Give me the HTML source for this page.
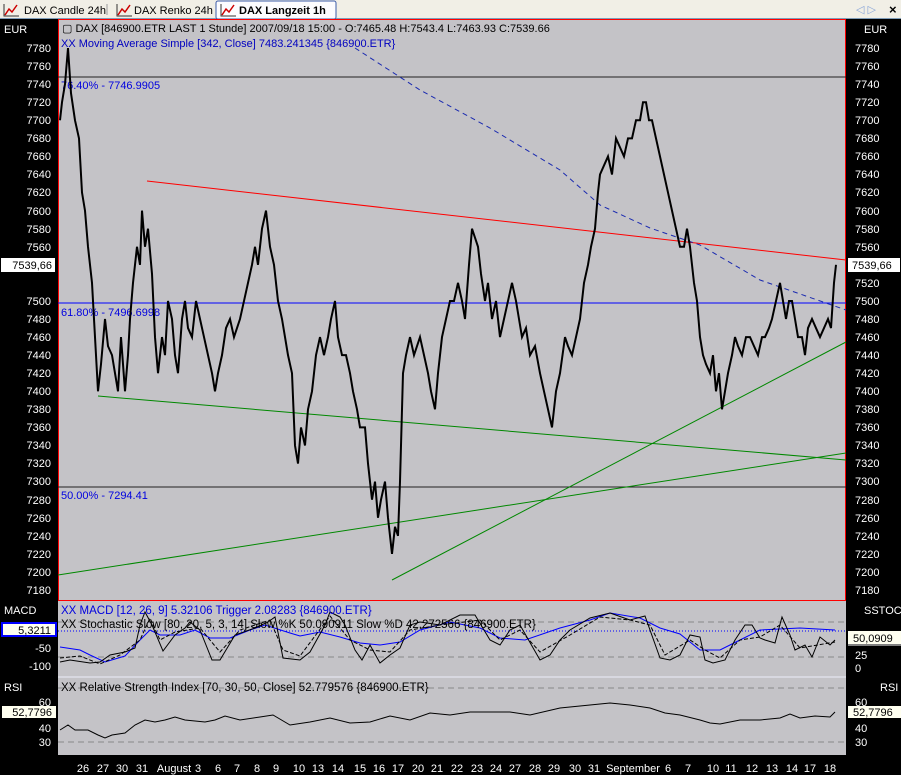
<!DOCTYPE html>
<html><head><meta charset="utf-8"><style>
body{margin:0;width:901px;height:775px;overflow:hidden;background:#000;font-family:"Liberation Sans",sans-serif}
svg{display:block}
</style></head><body>
<svg width="901" height="775" xmlns="http://www.w3.org/2000/svg" font-family="Liberation Sans, sans-serif" font-size="11">
<rect x="0" y="0" width="901" height="19" fill="#f1efe6"/>
<line x1="0" y1="18.5" x2="901" y2="18.5" stroke="#7f9db9"/>
<rect x="216" y="1" width="120" height="18" fill="#fcfcfe" stroke="#3c5ca8" rx="2"/>
<g stroke="#c00" stroke-width="1.5" fill="none">
<path d="M5 15 L9 9 L12 12 L17 5"/><path d="M118 15 L122 9 L125 12 L130 5"/><path d="M222 15 L226 9 L229 12 L234 5"/>
</g>
<g stroke="#333" fill="none"><path d="M4 4 V16 H19"/><path d="M117 4 V16 H132"/><path d="M221 4 V16 H236"/></g>
<text x="24" y="14" font-size="11">DAX Candle 24h</text>
<line x1="107" y1="4" x2="107" y2="15" stroke="#999"/>
<text x="134" y="14" font-size="11">DAX Renko 24h</text>
<text x="239" y="14" font-size="11" font-weight="bold">DAX Langzeit 1h</text>
<text x="856" y="13" fill="#8aa6d8" font-size="11">◁ ▷</text>
<text x="889" y="14" font-size="13" font-weight="bold">×</text>
<rect x="58" y="19" width="788" height="736" fill="#c4c3c7"/>
<rect x="58.5" y="19.5" width="787" height="581" fill="none" stroke="#f00"/>
<line x1="58" y1="677" x2="846" y2="677" stroke="#d8d8e0" stroke-width="2"/>
<line x1="58" y1="77" x2="846" y2="77" stroke="#222"/>
<line x1="58" y1="303" x2="846" y2="303" stroke="#00f"/>
<line x1="58" y1="487" x2="846" y2="487" stroke="#222"/>
<text x="61" y="89" fill="#0000e0">76.40% - 7746.9905</text>
<text x="61" y="316" fill="#0000e0">61.80% - 7496.6998</text>
<text x="61" y="499" fill="#0000e0">50.00% - 7294.41</text>
<line x1="147" y1="181" x2="846" y2="260" stroke="#f00"/>
<g stroke="#080" fill="none">
<line x1="98" y1="396" x2="846" y2="460"/>
<line x1="58" y1="575" x2="846" y2="453"/>
<line x1="392" y1="580" x2="846" y2="342"/>
</g>
<polyline points="355,48 420,90 490,128 560,170 600,205 650,228 700,245 760,280 846,310" fill="none" stroke="#1a2ab0" stroke-dasharray="5,4"/>
<g transform="matrix(1 0 0 -0.9033 0 7075.7)">
<polyline vector-effect="non-scaling-stroke" fill="none" stroke="#000" stroke-width="2" points="60,7700 62,7720 65,7740 68,7780 71,7730 75,7700 79,7680 82,7620 85,7600 88,7560 92,7520 95,7460 98,7400 101,7430 105,7480 108,7450 112,7440 115,7420 118,7400 121,7460 125,7400 128,7440 130,7480 133,7520 137,7560 140,7540 142,7600 145,7560 148,7580 152,7530 155,7460 158,7420 162,7460 165,7440 168,7500 172,7480 175,7440 178,7420 182,7480 185,7500 188,7470 192,7460 196,7500 200,7480 204,7460 208,7440 212,7420 215,7400 218,7420 222,7440 226,7470 230,7480 234,7460 240,7480 244,7500 248,7520 252,7540 255,7560 258,7540 262,7580 266,7600 270,7560 274,7540 278,7500 282,7480 285,7460 288,7440 292,7420 295,7340 298,7320 301,7360 305,7340 308,7380 312,7400 316,7440 320,7460 324,7440 328,7460 331,7480 335,7500 338,7460 342,7440 346,7440 350,7420 353,7400 357,7380 360,7360 365,7360 368,7320 372,7280 375,7300 378,7260 381,7280 385,7300 388,7260 392,7220 395,7250 398,7240 400,7300 403,7420 406,7440 410,7460 414,7440 420,7460 424,7440 428,7420 431,7400 435,7380 438,7420 442,7460 446,7480 450,7500 454,7500 458,7520 462,7500 465,7480 469,7540 472,7580 475,7570 478,7560 481,7530 485,7500 488,7520 492,7480 496,7500 500,7460 504,7480 508,7500 512,7520 516,7500 519,7480 522,7460 526,7470 530,7440 535,7450 540,7420 544,7400 548,7380 552,7360 556,7400 560,7420 565,7460 568,7450 572,7440 576,7460 580,7480 584,7520 588,7540 591,7560 595,7580 598,7620 600,7640 604,7650 608,7660 612,7640 616,7680 620,7670 624,7660 628,7680 632,7680 636,7700 640,7700 643,7720 646,7720 649,7700 652,7700 656,7680 660,7660 664,7640 668,7620 672,7600 676,7580 680,7560 684,7560 687,7580 690,7560 694,7520 697,7500 700,7460 703,7440 706,7430 710,7420 713,7440 716,7400 719,7420 722,7380 725,7400 728,7420 732,7440 735,7460 738,7450 742,7440 746,7460 750,7460 754,7450 758,7440 762,7460 765,7460 769,7470 772,7480 776,7500 780,7520 783,7500 786,7480 789,7500 792,7500 795,7480 798,7460 802,7460 805,7440 808,7470 812,7480 816,7470 820,7460 824,7470 828,7480 831,7470 834,7520 836,7540"/>
</g>
<text x="62" y="32" fill="#000">▢ DAX [846900.ETR LAST 1 Stunde] 2007/09/18 15:00 - O:7465.48 H:7543.4 L:7463.93 C:7539.66</text>
<text x="61" y="47" fill="#0000c0">XX Moving Average Simple [342, Close] 7483.241345 {846900.ETR}</text>
<line x1="58" y1="622" x2="846" y2="622" stroke="#888" stroke-dasharray="6,4"/>
<line x1="58" y1="657" x2="846" y2="657" stroke="#888" stroke-dasharray="6,4"/>
<line x1="58" y1="631" x2="846" y2="631" stroke="#00f" stroke-dasharray="1,2"/>
<polyline fill="none" stroke="#00f" points="60,647 80,650 90,655 105,662 125,656 140,640 150,630 160,635 180,635 195,630 210,638 230,638 250,630 265,625 290,633 300,636 320,632 340,637 360,643 380,645 400,642 420,630 450,622 480,628 500,638 525,640 560,628 590,620 610,613 640,618 660,628 680,634 700,650 720,650 740,640 760,630 800,628 835,630"/>
<polyline fill="none" stroke="#000" stroke-dasharray="4,2" points="60,658 80,656 100,664 120,655 140,640 150,618 160,640 175,632 200,628 220,652 240,630 270,620 283,650 300,656 330,616 350,640 370,650 390,652 410,630 440,625 480,620 500,640 520,630 540,652 570,635 600,617 630,620 650,625 665,655 690,640 705,650 720,658 740,640 760,637 780,625 800,648 835,642"/>
<polyline fill="none" stroke="#000" points="60,662 70,660 90,663 100,662 110,655 125,652 135,648 140,625 145,612 152,625 163,651 175,635 185,628 190,622 200,630 212,660 220,660 235,635 255,628 268,622 275,617 283,658 300,660 310,652 325,625 330,612 340,617 345,625 355,650 362,660 370,645 380,663 390,655 400,648 410,625 420,622 440,625 460,615 475,615 490,640 500,645 510,630 520,625 540,660 550,655 560,640 570,630 590,618 610,613 630,620 645,616 660,658 670,660 680,655 690,635 700,637 705,660 713,663 725,660 735,640 745,625 752,625 760,638 765,640 775,643 782,617 790,635 795,650 805,645 812,657 820,637 830,645 835,640"/>
<text x="61" y="614" fill="#0000e0" font-size="11.5">XX MACD [12, 26, 9] 5.32106 Trigger 2.08283 {846900.ETR}</text>
<text x="61" y="628" fill="#000" font-size="11.5">XX Stochastic Slow [80, 20, 5, 3, 14] Slow %K 50.090911 Slow %D 42.272566 {846900.ETR}</text>
<line x1="58" y1="688" x2="846" y2="688" stroke="#888" stroke-dasharray="6,4"/>
<line x1="58" y1="742" x2="846" y2="742" stroke="#888" stroke-dasharray="6,4"/>
<polyline fill="none" stroke="#000" points="60,730 68,725 75,730 88,730 98,735 105,738 112,735 125,733 135,725 145,720 155,722 165,720 175,717 185,720 205,722 215,720 225,716 240,720 260,717 273,715 290,725 310,722 330,718 350,723 370,722 390,716 410,720 430,713 450,715 470,712 490,712 510,712 530,715 560,708 590,705 610,703 630,705 650,708 665,713 680,715 700,720 710,723 720,724 740,720 760,720 780,718 790,714 800,718 815,716 830,717 835,712"/>
<text x="61" y="691" fill="#000" font-size="11.5">XX Relative Strength Index [70, 30, 50, Close] 52.779576 {846900.ETR}</text>
<g fill="#fff" font-size="11">
<text x="4" y="33">EUR</text>
<text x="4" y="614">MACD</text>
<text x="4" y="691">RSI</text>
<text x="864" y="33">EUR</text>
<text x="864" y="614">SSTOC</text>
<text x="880" y="691">RSI</text>
</g>
<g fill="#fff" font-size="11" text-anchor="end">
<text x="51" y="52">7780</text><text x="51" y="70">7760</text><text x="51" y="88">7740</text><text x="51" y="106">7720</text><text x="51" y="124">7700</text><text x="51" y="142">7680</text><text x="51" y="160">7660</text><text x="51" y="178">7640</text><text x="51" y="196">7620</text><text x="51" y="215">7600</text><text x="51" y="233">7580</text><text x="51" y="251">7560</text><text x="51" y="305">7500</text><text x="51" y="323">7480</text><text x="51" y="341">7460</text><text x="51" y="359">7440</text><text x="51" y="377">7420</text><text x="51" y="395">7400</text><text x="51" y="413">7380</text><text x="51" y="431">7360</text><text x="51" y="449">7340</text><text x="51" y="467">7320</text><text x="51" y="485">7300</text><text x="51" y="504">7280</text><text x="51" y="522">7260</text><text x="51" y="540">7240</text><text x="51" y="558">7220</text><text x="51" y="576">7200</text><text x="51" y="594">7180</text>
<text x="51" y="652">-50</text><text x="51" y="670">-100</text>
<text x="51" y="706">60</text><text x="51" y="732">40</text><text x="51" y="746">30</text>
</g>
<g fill="#fff" font-size="11">
<text x="855" y="52">7780</text><text x="855" y="70">7760</text><text x="855" y="88">7740</text><text x="855" y="106">7720</text><text x="855" y="124">7700</text><text x="855" y="142">7680</text><text x="855" y="160">7660</text><text x="855" y="178">7640</text><text x="855" y="196">7620</text><text x="855" y="215">7600</text><text x="855" y="233">7580</text><text x="855" y="251">7560</text><text x="855" y="287">7520</text><text x="855" y="305">7500</text><text x="855" y="323">7480</text><text x="855" y="341">7460</text><text x="855" y="359">7440</text><text x="855" y="377">7420</text><text x="855" y="395">7400</text><text x="855" y="413">7380</text><text x="855" y="431">7360</text><text x="855" y="449">7340</text><text x="855" y="467">7320</text><text x="855" y="485">7300</text><text x="855" y="504">7280</text><text x="855" y="522">7260</text><text x="855" y="540">7240</text><text x="855" y="558">7220</text><text x="855" y="576">7200</text><text x="855" y="594">7180</text>
<text x="855" y="659">25</text><text x="855" y="672">0</text>
<text x="855" y="706">60</text><text x="855" y="732">40</text><text x="855" y="746">30</text>
</g>
<rect x="1" y="258" width="54" height="14" fill="#fff"/><text x="52" y="269" text-anchor="end">7539,66</text>
<rect x="848" y="258" width="52" height="14" fill="#fff"/><text x="852" y="269">7539,66</text>
<rect x="2" y="623" width="54" height="13" fill="#fffff0" stroke="#00f" stroke-width="2"/><text x="51" y="634" text-anchor="end">5,3211</text>
<rect x="848" y="631" width="53" height="13" fill="#fffff0"/><text x="853" y="642">50,0909</text>
<line x1="848" y1="645" x2="901" y2="645" stroke="#fff"/>
<rect x="2" y="706" width="54" height="12" fill="#fffff0"/><text x="52" y="716" text-anchor="end">52,7796</text>
<rect x="848" y="706" width="53" height="12" fill="#fffff0"/><text x="853" y="716">52,7796</text>
<g fill="#fff" font-size="11" text-anchor="middle">
<text x="83" y="772">26</text><text x="103" y="772">27</text><text x="122" y="772">30</text><text x="142" y="772">31</text><text x="174" y="772">August</text><text x="198" y="772">3</text><text x="218" y="772">6</text><text x="237" y="772">7</text><text x="257" y="772">8</text><text x="276" y="772">9</text><text x="299" y="772">10</text><text x="318" y="772">13</text><text x="338" y="772">14</text><text x="360" y="772">15</text><text x="379" y="772">16</text><text x="398" y="772">17</text><text x="418" y="772">20</text><text x="437" y="772">21</text><text x="457" y="772">22</text><text x="477" y="772">23</text><text x="496" y="772">24</text><text x="515" y="772">27</text><text x="535" y="772">28</text><text x="554" y="772">29</text><text x="575" y="772">30</text><text x="594" y="772">31</text><text x="633" y="772">September</text><text x="668" y="772">6</text><text x="688" y="772">7</text><text x="713" y="772">10</text><text x="731" y="772">11</text><text x="752" y="772">12</text><text x="772" y="772">13</text><text x="792" y="772">14</text><text x="810" y="772">17</text><text x="830" y="772">18</text>
</g>
</svg>
</body></html>
